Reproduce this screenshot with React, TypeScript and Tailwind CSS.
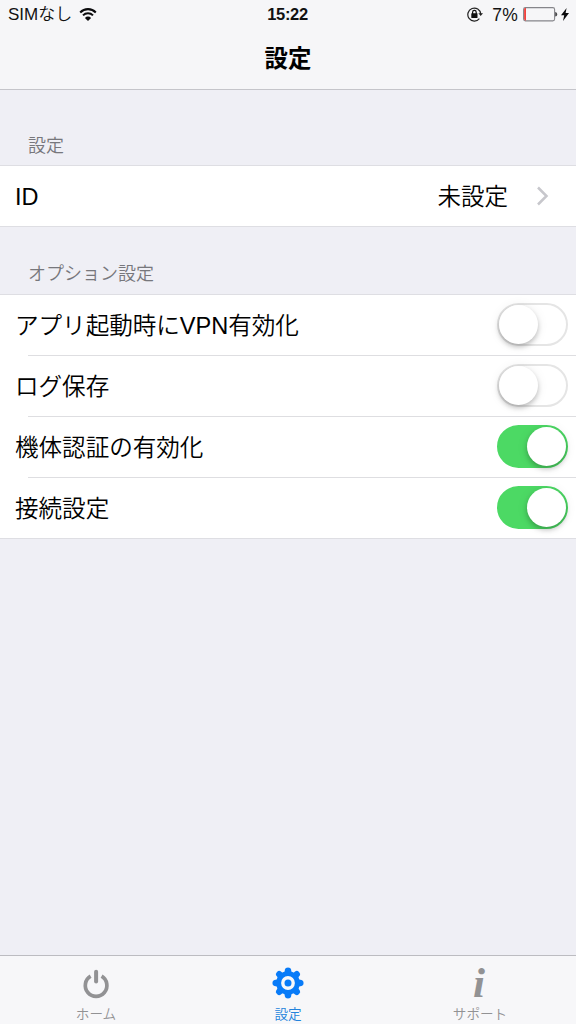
import React, { useState } from "react";

const gearTeeth = [0, 45, 90, 135, 180, 225, 270, 315];

function WifiIcon() {
  return (
    <svg width="18" height="14" viewBox="0 0 18 14" fill="none" stroke="#0b0b0d">
      <path d="M1.2 4.4a11 11 0 0 1 15.6 0" strokeWidth="2.1" />
      <path d="M4 7.4a7.1 7.1 0 0 1 10 0" strokeWidth="2" />
      <path d="M9 13L5.9 9.9a4.4 4.4 0 0 1 6.2 0z" fill="#0b0b0d" stroke="none" />
    </svg>
  );
}

function RotationLockIcon() {
  return (
    <svg width="16" height="15" viewBox="0 0 16 15" fill="none">
      <path d="M12.4 11.7A6.5 6.5 0 1 1 13.8 7" stroke="#222" strokeWidth="1.2" />
      <path d="M11.4 6.2H16l-2.3 2.9z" fill="#222" />
      <path d="M5.6 7V5.2a1.8 1.8 0 0 1 3.6 0V7" stroke="#111" strokeWidth="1.2" />
      <rect x="4.3" y="6.3" width="6.2" height="4.7" rx="0.5" fill="#111" />
    </svg>
  );
}

function BatteryIcon() {
  return (
    <svg width="35" height="15" viewBox="0 0 35 15" fill="none">
      <rect x="0.6" y="0.6" width="31" height="13.3" rx="1.8" stroke="#85858a" strokeWidth="1.1" />
      <path d="M3 1.1H2.4a1.3 1.3 0 0 0-1.3 1.3v9.7a1.3 1.3 0 0 0 1.3 1.3H3z" fill="#f0433f" />
      <path d="M32.2 5c1.2 0 2 1 2 2.3s-.8 2.3-2 2.3z" fill="#4a4a4c" />
    </svg>
  );
}

function BoltIcon() {
  return (
    <svg width="8" height="13" viewBox="0 0 8 13" fill="#0b0b0d">
      <path d="M5.6 0L0 7.3h3.2L2 13 8 5.1H4.6z" />
    </svg>
  );
}

function PowerIcon() {
  return (
    <svg width="32" height="32" viewBox="0 0 32 32" fill="none" stroke="#929294">
      <path d="M10.6 9.2a10.8 10.8 0 1 0 11 0" strokeWidth="3.7" />
      <path d="M16.1 4.7v9.8" strokeWidth="4" strokeLinecap="round" />
    </svg>
  );
}

function GearIcon() {
  return (
    <svg width="32" height="32" viewBox="0 0 32 32" fill="#087bf8">
      {gearTeeth.map((angle) => (
        <path
          key={angle}
          d="M11 7C12.8 5.6 12.6 4.4 12.9 2.4Q13.2 0.4 16 0.4T19.1 2.4C19.4 4.4 19.2 5.6 21 7z"
          transform={`rotate(${angle} 16 16)`}
        />
      ))}
      <circle cx="16" cy="16" r="11.8" />
      <circle cx="16" cy="16" r="5.2" fill="none" stroke="#f7f7f9" strokeWidth="3.4" />
    </svg>
  );
}

function InfoIcon() {
  return (
    <span className="block h-8 w-8 pr-0.5 text-center font-['Liberation_Serif',serif] text-[43px] leading-[31px] font-bold italic">
      i
    </span>
  );
}

function Toggle({ on, onChange }: { on: boolean; onChange: () => void }) {
  return (
    <button
      type="button"
      role="switch"
      aria-checked={on}
      onClick={onChange}
      className={`flex h-[43px] w-[71px] shrink-0 items-center rounded-full border-2 ${
        on ? "justify-end border-[#4cd964] bg-[#4cd964]" : "justify-start border-[#e5e5e5] bg-white"
      }`}
    >
      <span className="h-[39px] w-[39px] rounded-full bg-white shadow-[0_3px_5px_rgba(0,0,0,0.22),0_1px_12px_rgba(0,0,0,0.08)]" />
    </button>
  );
}

function SectionTitle({ children }: { children: React.ReactNode }) {
  return <h2 className="pl-7 text-[18px] leading-6 font-[350] text-[#77777c]">{children}</h2>;
}

const initialOptions = [
  { label: "アプリ起動時にVPN有効化", on: false },
  { label: "ログ保存", on: false },
  { label: "機体認証の有効化", on: true },
  { label: "接続設定", on: true },
];

const tabs = [
  { label: "ホーム", icon: PowerIcon },
  { label: "設定", icon: GearIcon },
  { label: "サポート", icon: InfoIcon },
];

export default function App() {
  const [options, setOptions] = useState(initialOptions);
  const [activeTab, setActiveTab] = useState("設定");

  const toggleOption = (label: string) => {
    setOptions(options.map((o) => (o.label === label ? { ...o, on: !o.on } : o)));
  };

  return (
    <div className="flex h-[1024px] w-[576px] flex-col overflow-hidden bg-[#efeff5] font-['Liberation_Sans','Noto_Sans_CJK_JP',sans-serif] text-black">
      {/* Status bar and title */}
      <header className="h-[90px] shrink-0 border-b border-[#c5c5ca] bg-[#f6f6f8]">
        <div className="grid h-[29px] grid-cols-3 items-center pr-[7px] pl-2 text-[17px] leading-none text-[#111]">
          <div className="flex items-center gap-[7px]">
            <span className="font-[350]">SIMなし</span>
            <WifiIcon />
          </div>
          <span className="pr-0.5 text-center text-[16.5px] font-bold tracking-[-0.3px]">15:22</span>
          <div className="flex items-center justify-end">
            <RotationLockIcon />
            <span className="mr-[5px] ml-[9px] pt-0.5 text-[17.5px] tracking-[0.2px]">7%</span>
            <BatteryIcon />
            <span className="ml-[3px]">
              <BoltIcon />
            </span>
          </div>
        </div>
        <h1 className="text-center text-[23.4px] leading-[61px] font-bold">設定</h1>
      </header>

      <main className="flex-1">
        <section className="pt-11">
          <SectionTitle>設定</SectionTitle>
          <div className="mt-[7px] flex h-[62px] items-center justify-between border-y border-[#dedee3] bg-white pr-[27px] pl-[15px] text-[23.5px] font-[350]">
            <span className="pt-[3px]">ID</span>
            <div className="flex items-center gap-7">
              <span className="pt-[3px]">未設定</span>
              <svg width="13" height="20" viewBox="0 0 13 20" fill="none" stroke="#c7c7cc" strokeWidth="2.5">
                <path d="M2 1.5l8.5 8.5L2 18.5" />
              </svg>
            </div>
          </div>
        </section>

        <section className="pt-[35px]">
          <SectionTitle>オプション設定</SectionTitle>
          <div className="mt-2 border-y border-[#dedee3] bg-white">
            {options.map((option, i) => (
              <div key={option.label}>
                {i > 0 && <div className="ml-7 h-px bg-[#dedee1]" />}
                <div className="flex h-[60px] items-center justify-between pr-2 pb-px pl-[15px] text-[23.6px] font-[350]">
                  <span className="pt-1 tracking-[-0.05px]">{option.label}</span>
                  <Toggle on={option.on} onChange={() => toggleOption(option.label)} />
                </div>
              </div>
            ))}
          </div>
        </section>
      </main>

      {/* Tab bar */}
      <nav className="grid h-[69px] shrink-0 grid-cols-3 border-t border-[#bcbcc1] bg-[#f7f7f9]">
        {tabs.map(({ label, icon: Icon }) => (
          <button
            key={label}
            type="button"
            onClick={() => setActiveTab(label)}
            className={`flex flex-col items-center pt-[11px] ${
              activeTab === label ? "text-[#2383dc]" : "text-[#929294]"
            }`}
          >
            <Icon />
            <span className="mt-1.5 text-[13.6px] leading-5 font-[350]">{label}</span>
          </button>
        ))}
      </nav>
    </div>
  );
}
